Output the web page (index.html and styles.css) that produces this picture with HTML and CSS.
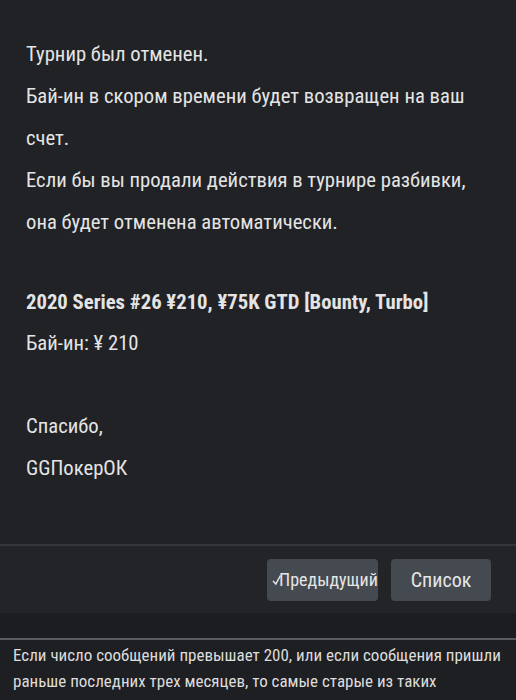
FILE: index.html
```html
<!DOCTYPE html>
<html lang="ru">
<head>
<meta charset="utf-8">
<link rel="stylesheet" href="styles.css">
</head>
<body>
<main class="message">
  <p class="line">Турнир был отменен.</p>
  <p class="line">Бай-ин в скором времени будет возвращен на ваш счет.</p>
  <p class="line">Если бы вы продали действия в турнире разбивки, она будет отменена автоматически.</p>
  <p class="title">2020 Series #26 ¥210, ¥75K GTD [Bounty, Turbo]</p>
  <p class="line">Бай-ин: ¥ 210</p>
  <p class="line sign">Спасибо,</p>
  <p class="line">GGПокерОК</p>
</main>
<nav class="actions">
  <button class="btn btn-prev"><svg class="chk" viewBox="0 0 10 12" width="10" height="12"><path d="M1 7 L3.8 10 L8.5 1.5" fill="none" stroke="#e6e6e6" stroke-width="1.5"/></svg>Предыдущий</button>
  <button class="btn btn-list">Список</button>
</nav>
<div class="spacer"></div>
<footer class="note">Если число сообщений превышает 200, или если сообщения пришли раньше последних трех месяцев, то самые старые из таких сообщений будут удалены.</footer>
</body>
</html>
```
FILE: styles.css
```css
html, body {
  margin: 0;
  padding: 0;
  background: #202226;
  height: 700px;
  overflow: hidden;
}
body {
  font-family: "Roboto Condensed", "Liberation Sans Narrow", Roboto, sans-serif;
  color: #e4e4e4;
}
.message {
  padding: 33px 26px 0 26px;
  height: 546px;
  box-sizing: border-box;
  border-bottom: 2px solid #33363a;
}
.line, .title {
  margin: 0;
  font-size: 20.7px;
  line-height: 42px;
}
.title {
  font-weight: 700;
  margin-top: 39px;
  line-height: 40px;
}
.sign { margin-top: 41px; }
.actions {
  height: 67px;
  background: #222428;
  display: flex;
  justify-content: flex-end;
  align-items: center;
  gap: 13px;
  padding-right: 25px;
}
.btn {
  height: 42px;
  border: none;
  border-radius: 4px;
  background: #454950;
  color: #e6e6e6;
  font-family: inherit;
  font-size: 20px;
  padding: 0;
  position: relative;
}
.btn-prev {
  width: 111px;
  font-size: 18px;
  padding-left: 12px;
  white-space: nowrap;
  text-align: left;
}
.chk {
  position: absolute;
  left: 5px;
  top: 15px;
}
.btn-list { width: 100px; }
.spacer {
  height: 25px;
  background: #1c1d20;
  border-bottom: 2px solid #5a5b5f;
}
.note {
  background: #1e1f22;
  padding: 2px 13px;
  font-size: 17px;
  line-height: 26px;
  color: #dcdcdc;
}
```
